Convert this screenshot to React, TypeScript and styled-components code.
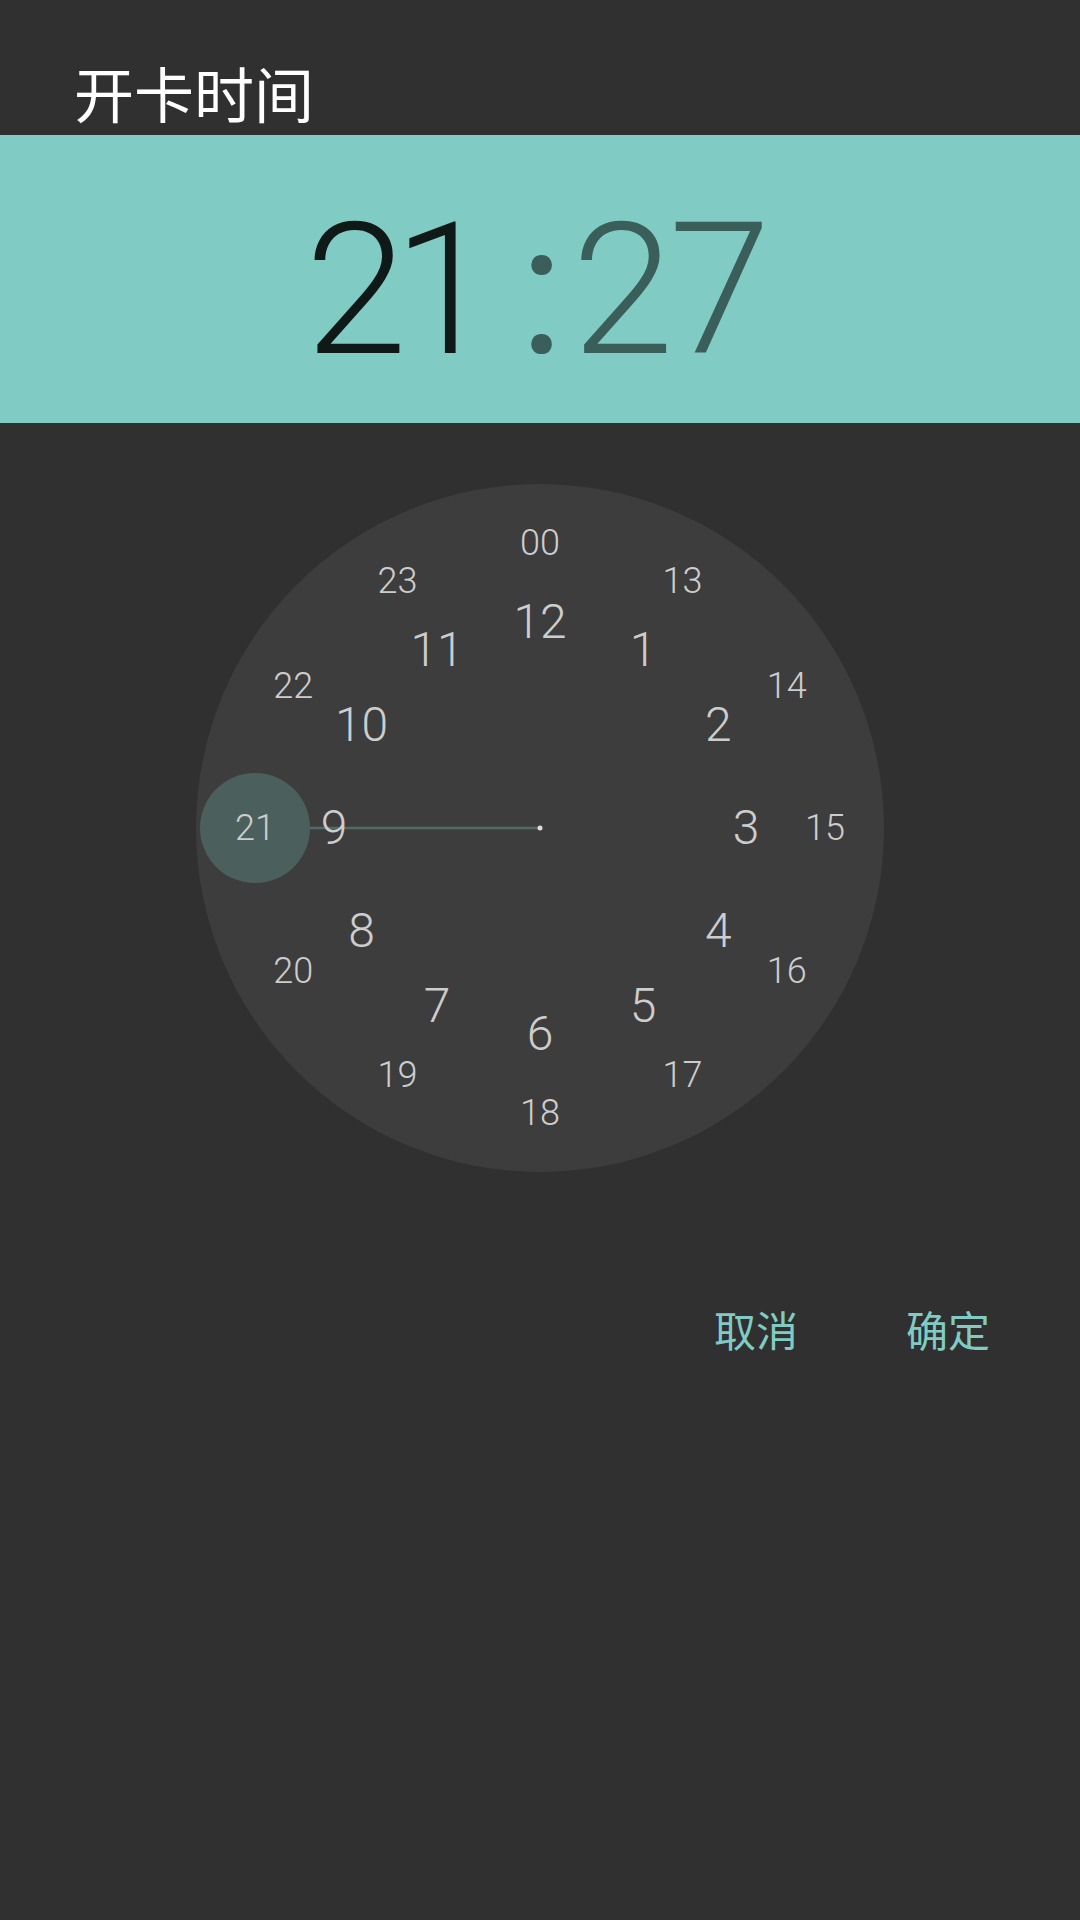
import React from "react";
import styled, { createGlobalStyle } from "styled-components";

const GlobalStyle = createGlobalStyle`
  html, body {
    margin: 0;
    padding: 0;
    background: #303030;
  }
  body {
    font-family: Roboto, "Noto Sans CJK SC", sans-serif;
  }
`;

const Page = styled.div`
  width: 1080px;
  min-height: 1920px;
  background: #303030;
  display: flex;
  flex-direction: column;
`;

const Header = styled.header`
  height: 135px;
  box-sizing: border-box;
  padding: 62px 0 0 74px;
`;

const Title = styled.h1`
  margin: 0;
  font-family: "Noto Sans CJK SC", "Noto Sans", sans-serif;
  font-weight: 400;
  font-size: 60px;
  line-height: 60px;
  color: #ffffff;
`;

const TimeBand = styled.section`
  height: 288px;
  box-sizing: border-box;
  padding: 63px 9px 0 0;
  background: #80cbc4;
  display: flex;
  justify-content: center;
  align-items: flex-start;
`;

const TimePart = styled.span<{ $active?: boolean; $spacing: number }>`
  font-family: Roboto, "Liberation Sans", sans-serif;
  font-weight: 300;
  font-size: 184px;
  line-height: 184px;
  letter-spacing: ${(p) => p.$spacing}px;
  color: ${(p) => (p.$active ? "#0f1a18" : "#3a5e59")};
`;

const Colon = styled.span`
  font-family: Roboto, "Liberation Sans", sans-serif;
  font-weight: 400;
  font-size: 184px;
  line-height: 184px;
  color: #3a5e59;
  margin: 0 8px 0 38px;
`;

const Dial = styled.div`
  position: relative;
  width: 688px;
  height: 688px;
  border-radius: 50%;
  background: #3d3d3d;
  margin: 61px auto 0;
`;

const HandLayer = styled.svg`
  position: absolute;
  inset: 0;
`;

const Num = styled.span<{ $inner?: boolean }>`
  position: absolute;
  transform: translate(-50%, -50%);
  font-family: Roboto, "Liberation Sans", sans-serif;
  font-weight: 300;
  font-size: ${(p) => (p.$inner ? 48 : 36)}px;
  line-height: 1;
  color: #cdcdcd;
  white-space: nowrap;
`;

const Actions = styled.div`
  display: flex;
  justify-content: flex-end;
  gap: 52px;
  margin-top: 112px;
  padding-right: 62px;
`;

const ActionButton = styled.button`
  background: none;
  border: none;
  padding: 24px 28px;
  font-family: "Noto Sans CJK SC", "Noto Sans", sans-serif;
  font-size: 42px;
  line-height: 42px;
  color: #80cbc4;
  cursor: pointer;
`;

const R = 344;
const OUTER = 285;
const INNER = 206;

function pos(index: number, radius: number) {
  const a = (index / 12) * Math.PI * 2;
  return {
    left: R + radius * Math.sin(a),
    top: R - radius * Math.cos(a),
  };
}

export default function App() {
  const inner = Array.from({ length: 12 }, (_, i) => (i === 0 ? 12 : i));
  const outer = Array.from({ length: 12 }, (_, i) =>
    i === 0 ? "00" : String(i + 12)
  );
  const sel = pos(9, OUTER);

  return (
    <Page>
      <GlobalStyle />
      <Header>
        <Title>开卡时间</Title>
      </Header>
      <TimeBand>
        <TimePart $active $spacing={-14}>
          21
        </TimePart>
        <Colon>:</Colon>
        <TimePart $spacing={-5}>27</TimePart>
      </TimeBand>
      <Dial>
        <HandLayer width="688" height="688" viewBox="0 0 688 688">
          <line
            x1={R}
            y1={R}
            x2={sel.left}
            y2={sel.top}
            stroke="#526b67"
            strokeWidth="2.5"
          />
          <circle cx={sel.left} cy={sel.top} r="55" fill="#4b605d" />
          <circle cx={R} cy={R} r="2.5" fill="#dddddd" />
        </HandLayer>
        {outer.map((label, i) => {
          const p = pos(i, OUTER);
          return (
            <Num key={"o" + label} style={{ left: p.left, top: p.top }}>
              {label}
            </Num>
          );
        })}
        {inner.map((label, i) => {
          const p = pos(i, INNER);
          return (
            <Num $inner key={"i" + label} style={{ left: p.left, top: p.top }}>
              {label}
            </Num>
          );
        })}
      </Dial>
      <Actions>
        <ActionButton>取消</ActionButton>
        <ActionButton>确定</ActionButton>
      </Actions>
    </Page>
  );
}
